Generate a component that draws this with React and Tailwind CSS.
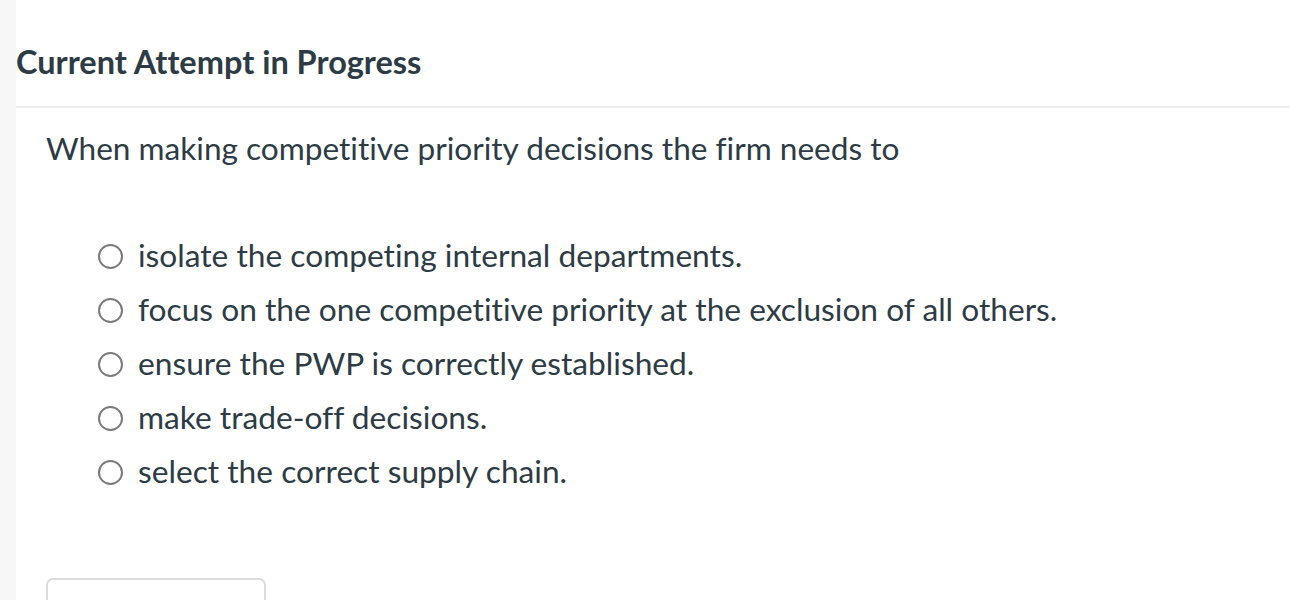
import React from 'react';

const options = [
  'isolate the competing internal departments.',
  'focus on the one competitive priority at the exclusion of all others.',
  'ensure the PWP is correctly established.',
  'make trade-off decisions.',
  'select the correct supply chain.',
];

function Radio() {
  return <span className="inline-block w-[25px] h-[25px] rounded-full border-2 border-[#7a7a7a] bg-white shrink-0" />;
}

export default function App() {
  return (
    <div className="flex h-[600px] overflow-hidden bg-white text-[#2d3b45] [font-variant-ligatures:none]" style={{ fontFamily: 'Lato, "Open Sans", sans-serif' }}>
      <div className="w-[16px] shrink-0 bg-[#f7f7f7]" />
      <div className="flex-1 overflow-hidden">
        <h2 className="pt-[43px] pb-[25px] border-b-2 border-[#ededed] text-[32.5px] leading-[38px] font-bold">
          Current Attempt in Progress
        </h2>
        <div className="pl-[30px]">
          <p className="mt-[21px] text-[31.6px] leading-[38px]">
            When making competitive priority decisions the firm needs to
          </p>
          <ul className="mt-[62px] pl-[52px]">
            {options.map((o) => (
              <li key={o} className="flex items-center gap-[15px] h-[54px] text-[31.7px]">
                <Radio />
                <span>{o}</span>
              </li>
            ))}
          </ul>
          <button className="mt-[79px] w-[220px] h-[60px] rounded-[7px] border-2 border-[#dcdcdc] bg-white" />
        </div>
      </div>
    </div>
  );
}
